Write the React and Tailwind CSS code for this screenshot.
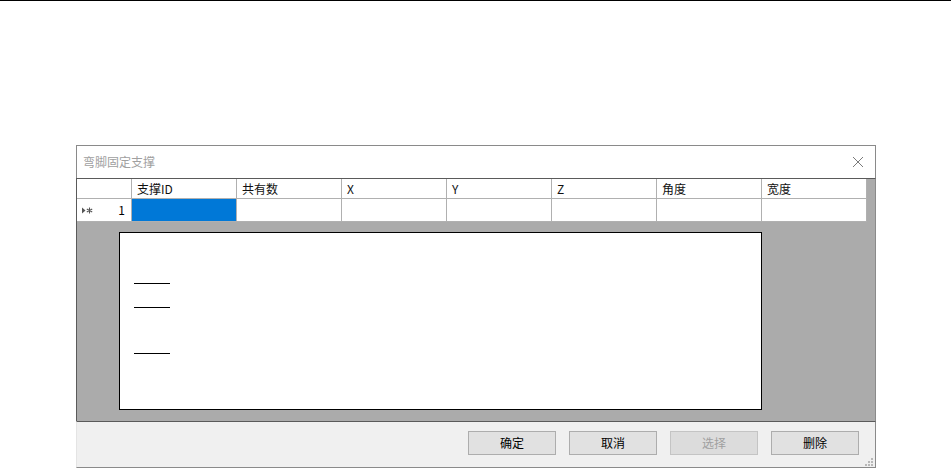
import React from 'react';

const COLUMNS = ['支撑ID', '共有数', 'X', 'Y', 'Z', '角度', '宽度'];
const BUTTONS = [
  { label: '确定', disabled: false },
  { label: '取消', disabled: false },
  { label: '选择', disabled: true },
  { label: '删除', disabled: false },
];

const FONT = { fontFamily: '"Noto Sans CJK SC", "Noto Sans", sans-serif' };

function CloseIcon() {
  return (
    <svg width="12" height="12" viewBox="0 0 12 12" className="text-[#7a7a7a]">
      <path d="M1 1 L11 11 M11 1 L1 11" stroke="currentColor" strokeWidth="1" fill="none" />
    </svg>
  );
}

// row indicator: current row + new row marker
function RowMarker() {
  return (
    <svg width="11" height="7" viewBox="0 0 11 7" className="text-[#555]">
      <path d="M0 0.5 L0 6.5 L3.5 3.5 Z" fill="currentColor" />
      <path d="M7.5 0.5 L7.5 6.5 M4.8 2 L10.2 5 M10.2 2 L4.8 5" stroke="currentColor" strokeWidth="1.1" fill="none" />
    </svg>
  );
}

function Grip() {
  return (
    <svg width="8" height="8" viewBox="0 0 8 8" className="text-[#b8b8b8]">
      <rect x="6" y="0" width="2" height="2" fill="currentColor" />
      <rect x="3" y="3" width="2" height="2" fill="currentColor" />
      <rect x="6" y="3" width="2" height="2" fill="currentColor" />
      <rect x="0" y="6" width="2" height="2" fill="currentColor" />
      <rect x="3" y="6" width="2" height="2" fill="currentColor" />
      <rect x="6" y="6" width="2" height="2" fill="currentColor" />
    </svg>
  );
}

export default function App() {
  return (
    <div className="w-[951px] h-[468px] bg-white overflow-hidden text-[12px] text-black" style={FONT}>
      <div className="h-px bg-black" />

      <div className="ml-[76px] mt-[144px] w-[800px]">
        {/* title bar */}
        <div className="h-[33px] border border-b-0 border-[#8a8a8a] bg-white flex items-center justify-between pl-[6px] pr-[11px]">
          <span className="text-[#a0a0a0] text-[12px]">弯脚固定支撑</span>
          <CloseIcon />
        </div>

        {/* grid area */}
        <div className="h-[243px] border-t border-l border-r border-t-[#5a5a5a] border-l-[#5a5a5a] border-r-[#8a8a8a] bg-[#ababab]">
          <div className="flex flex-col w-[790px]">
            <div className="flex h-[20px]">
              <div className="w-[55px] bg-white border-r border-b border-[#b0b0b0]" />
              {COLUMNS.map((c) => (
                <div key={c} className="w-[105px] bg-white border-r border-b border-[#b0b0b0] pl-[5px] flex items-center leading-none text-[#111]">
                  {c}
                </div>
              ))}
            </div>
            <div className="flex h-[23px]">
              <div className="w-[55px] bg-white border-r border-b border-[#b0b0b0] flex items-center justify-between pl-[5px] pr-[6px]">
                <RowMarker />
                <span className="leading-none">1</span>
              </div>
              {COLUMNS.map((c, i) => (
                <div
                  key={c}
                  className={i === 0 ? 'w-[105px] bg-[#0078d7] border-r border-b border-[#b0b0b0]' : 'w-[105px] bg-white border-r border-b border-[#b0b0b0]'}
                />
              ))}
            </div>
          </div>

          <div className="ml-[42px] mt-[10px] w-[643px] h-[178px] bg-white border border-black pl-[14px] pt-[50px]">
            <div className="w-[36px] h-px bg-black" />
            <div className="w-[36px] h-px bg-black mt-[23px]" />
            <div className="w-[36px] h-px bg-black mt-[45px]" />
          </div>
        </div>

        {/* button panel */}
        <div className="h-[47px] border-t border-t-[#5a5a5a] border-l border-l-[#e4e4e4] border-r border-r-[#8a8a8a] border-b border-b-[#8a8a8a] bg-[#f0f0f0] flex items-start justify-end pr-[16px] pt-[9px] relative">
          <div className="flex gap-[13px]">
            {BUTTONS.map((b) => (
              <div
                key={b.label}
                className={
                  b.disabled
                    ? 'w-[88px] h-[24px] bg-[#dcdcdc] border border-[#c4c4c4] text-[#a0a0a0] flex items-center justify-center'
                    : 'w-[88px] h-[24px] bg-[#e1e1e1] border border-[#adadad] text-black flex items-center justify-center'
                }
              >
                {b.label}
              </div>
            ))}
          </div>
          <div className="absolute right-[2px] bottom-[1px]">
            <Grip />
          </div>
        </div>
      </div>
    </div>
  );
}
